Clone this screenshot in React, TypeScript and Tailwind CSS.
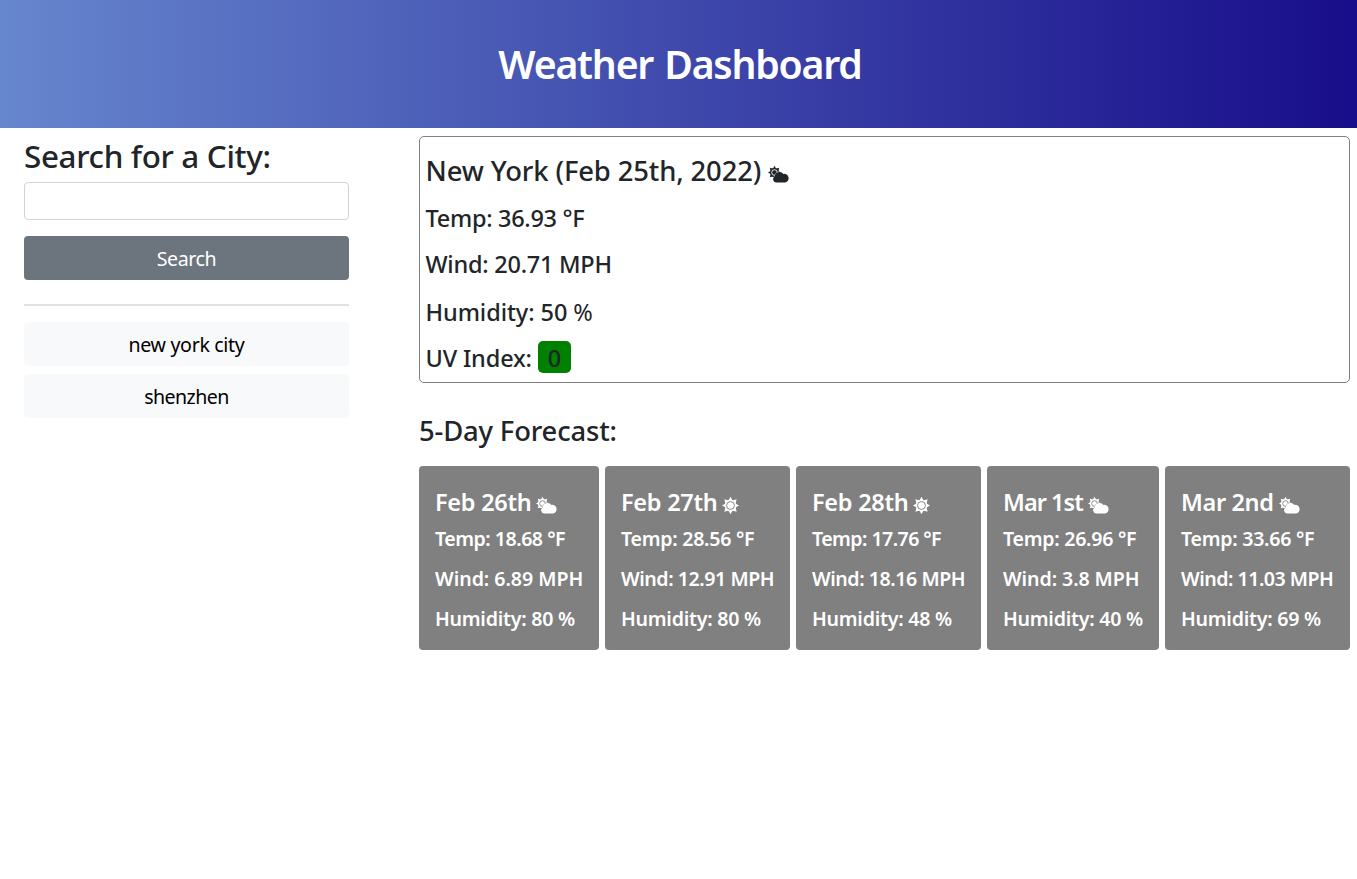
import type { ReactNode } from "react";

type Sky = "sun" | "cloud";

const RAYS = [0, 45, 90, 135, 180, 225, 270, 315];

function SunIcon() {
  return (
    <svg viewBox="0 0 16 16" className="ml-[5px] mt-[5px] h-[17px] w-[17px] shrink-0" fill="currentColor">
      {RAYS.map((r) => (
        <path key={r} d="M8 -0.2L10.9 5H5.1Z" transform={`rotate(${r} 8 8)`} />
      ))}
      <circle cx="8" cy="8" r="5.4" />
      <circle cx="8" cy="8" r="3.7" fill="none" stroke="#808080" strokeWidth="0.9" />
    </svg>
  );
}

function CloudIcon({ dark = false }: { dark?: boolean }) {
  const gap = dark ? "#ffffff" : "#808080";
  return (
    <svg
      viewBox="0 0 21 17"
      className={`h-[17px] w-[21px] shrink-0 ${dark ? "mt-[7px] ml-[7px]" : "mt-[5px] ml-[5px]"}`}
      fill="currentColor"
    >
      {RAYS.map((r) => (
        <path key={r} d="M6.5 -0.2L8.8 4H4.2Z" transform={`rotate(${r} 6.5 6.5)`} />
      ))}
      <circle cx="6.5" cy="6.5" r="4.5" />
      <circle cx="6.5" cy="6.5" r="2.8" fill="none" stroke={gap} strokeWidth="0.9" />
      <path
        d="M8.4 16.6a3.4 3.4 0 0 1-1.8-6.2A4.9 4.9 0 0 1 15.4 7.9 4.4 4.4 0 0 1 17 16.6Z"
        stroke={gap}
        strokeWidth="0.8"
        paintOrder="stroke"
      />
    </svg>
  );
}

interface Day {
  date: string;
  dateCls: string;
  sky: Sky;
  temp: string;
  tempCls: string;
  wind: string;
  windCls: string;
  humidity: string;
}

const DAYS: Day[] = [
  { date: "Feb 26th", dateCls: "tracking-[-0.27px]", sky: "cloud", temp: "18.68", tempCls: "tracking-[-0.5px]", wind: "6.89", windCls: "tracking-[-0.03px]", humidity: "80" },
  { date: "Feb 27th", dateCls: "tracking-[-0.27px]", sky: "sun", temp: "28.56", tempCls: "tracking-[-0.27px]", wind: "12.91", windCls: "tracking-[-0.45px]", humidity: "80" },
  { date: "Feb 28th", dateCls: "tracking-[-0.27px]", sky: "sun", temp: "17.76", tempCls: "tracking-[-0.57px]", wind: "18.16", windCls: "tracking-[-0.45px]", humidity: "48" },
  { date: "Mar 1st", dateCls: "tracking-[-0.95px]", sky: "cloud", temp: "26.96", tempCls: "tracking-[-0.27px]", wind: "3.8", windCls: "tracking-[-0.08px]", humidity: "40" },
  { date: "Mar 2nd", dateCls: "tracking-[-0.35px]", sky: "cloud", temp: "33.66", tempCls: "tracking-[-0.27px]", wind: "11.03", windCls: "tracking-[-0.5px]", humidity: "69" },
];

function Line({ cls, children }: { cls: string; children: ReactNode }) {
  return <p className={`h-10 text-[19.6px] leading-6 whitespace-nowrap ${cls}`}>{children}</p>;
}

function ForecastCard({ day }: { day: Day }) {
  return (
    <article className="h-[184px] rounded bg-[#808080] pt-[22px] pl-4 font-semibold text-white">
      <h4 className={`flex h-[30px] items-center text-[23.5px] whitespace-nowrap ${day.dateCls}`}>
        {day.date}
        {day.sky === "sun" ? <SunIcon /> : <CloudIcon />}
      </h4>
      <div className="pt-[9px]">
        <Line cls={day.tempCls}>Temp: {day.temp} °F</Line>
        <Line cls={day.windCls}>Wind: {day.wind} MPH</Line>
        <Line cls="tracking-[-0.25px]">Humidity: {day.humidity} %</Line>
      </div>
    </article>
  );
}

export default function App() {
  return (
    <div className="min-h-[879px] bg-white font-['Noto_Sans',sans-serif] font-medium text-[#212529]">
      <header className="flex h-[127.6px] items-center justify-center bg-[linear-gradient(90deg,#6686ce,#180d8a)] pt-px pl-[3px]">
        <h1 className="text-[39.2px] leading-[48px] font-semibold tracking-[-1.2px] [word-spacing:2px] text-white">
          Weather Dashboard
        </h1>
      </header>
      <div className="flex justify-between pt-2 pr-[7px] pl-6">
        <aside className="w-[325px]">
          <h2 className="text-[31.4px] leading-[39px] tracking-[-0.33px] whitespace-nowrap">Search for a City:</h2>
          <input className="mt-[7.4px] block h-[38px] w-full rounded border border-[#ced4da] px-3 outline-none" />
          <button className="mt-4 block h-11 w-full rounded bg-[#6c757d] pt-0.5 text-[19.6px] font-normal tracking-[-0.4px] text-white">
            Search
          </button>
          <hr className="mt-6 h-0.5 border-0 bg-[#e0e1e2]" />
          <button className="mt-4 block h-11 w-full rounded bg-[#f8f9fa] pt-0.5 text-[19.6px] font-normal tracking-[-0.33px] text-black">
            new york city
          </button>
          <button className="mt-2 block h-11 w-full rounded bg-[#f8f9fa] pt-0.5 text-[19.6px] font-normal tracking-[-0.55px] text-black">
            shenzhen
          </button>
        </aside>
        <main className="w-[931px]">
          <section className="h-[247px] rounded-[5px] border border-[#808080] pt-[17px] pl-[5.5px]">
            <h3 className="flex h-[34px] items-center text-[27.4px] tracking-[-0.12px] whitespace-nowrap">
              New York (Feb 25th, 2022)
              <CloudIcon dark />
            </h3>
            <div className="pt-[15px] text-[23.5px] leading-[30px]">
              <p className="h-[46px] tracking-[-0.3px]">Temp: 36.93 °F</p>
              <p className="h-12 tracking-[-0.25px]">Wind: 20.71 MPH</p>
              <p className="h-[46px] tracking-[-0.07px]">
                Humidity: 50 <span className="font-normal">%</span>
              </p>
              <p className="flex h-[30px] items-center tracking-[-0.15px]">
                UV Index:
                <span className="-mt-0.5 ml-[6px] flex h-8 w-[33px] items-center justify-center rounded-[5px] bg-[#008000] pt-0.5">
                  0
                </span>
              </p>
            </div>
          </section>
          <h3 className="mt-[31px] text-[27.4px] leading-[34px] tracking-[-0.15px]">5-Day Forecast:</h3>
          <div className="mt-[18.4px] grid grid-cols-[180px_185px_185px_172px_185px] justify-between">
            {DAYS.map((d) => (
              <ForecastCard key={d.date} day={d} />
            ))}
          </div>
        </main>
      </div>
    </div>
  );
}
